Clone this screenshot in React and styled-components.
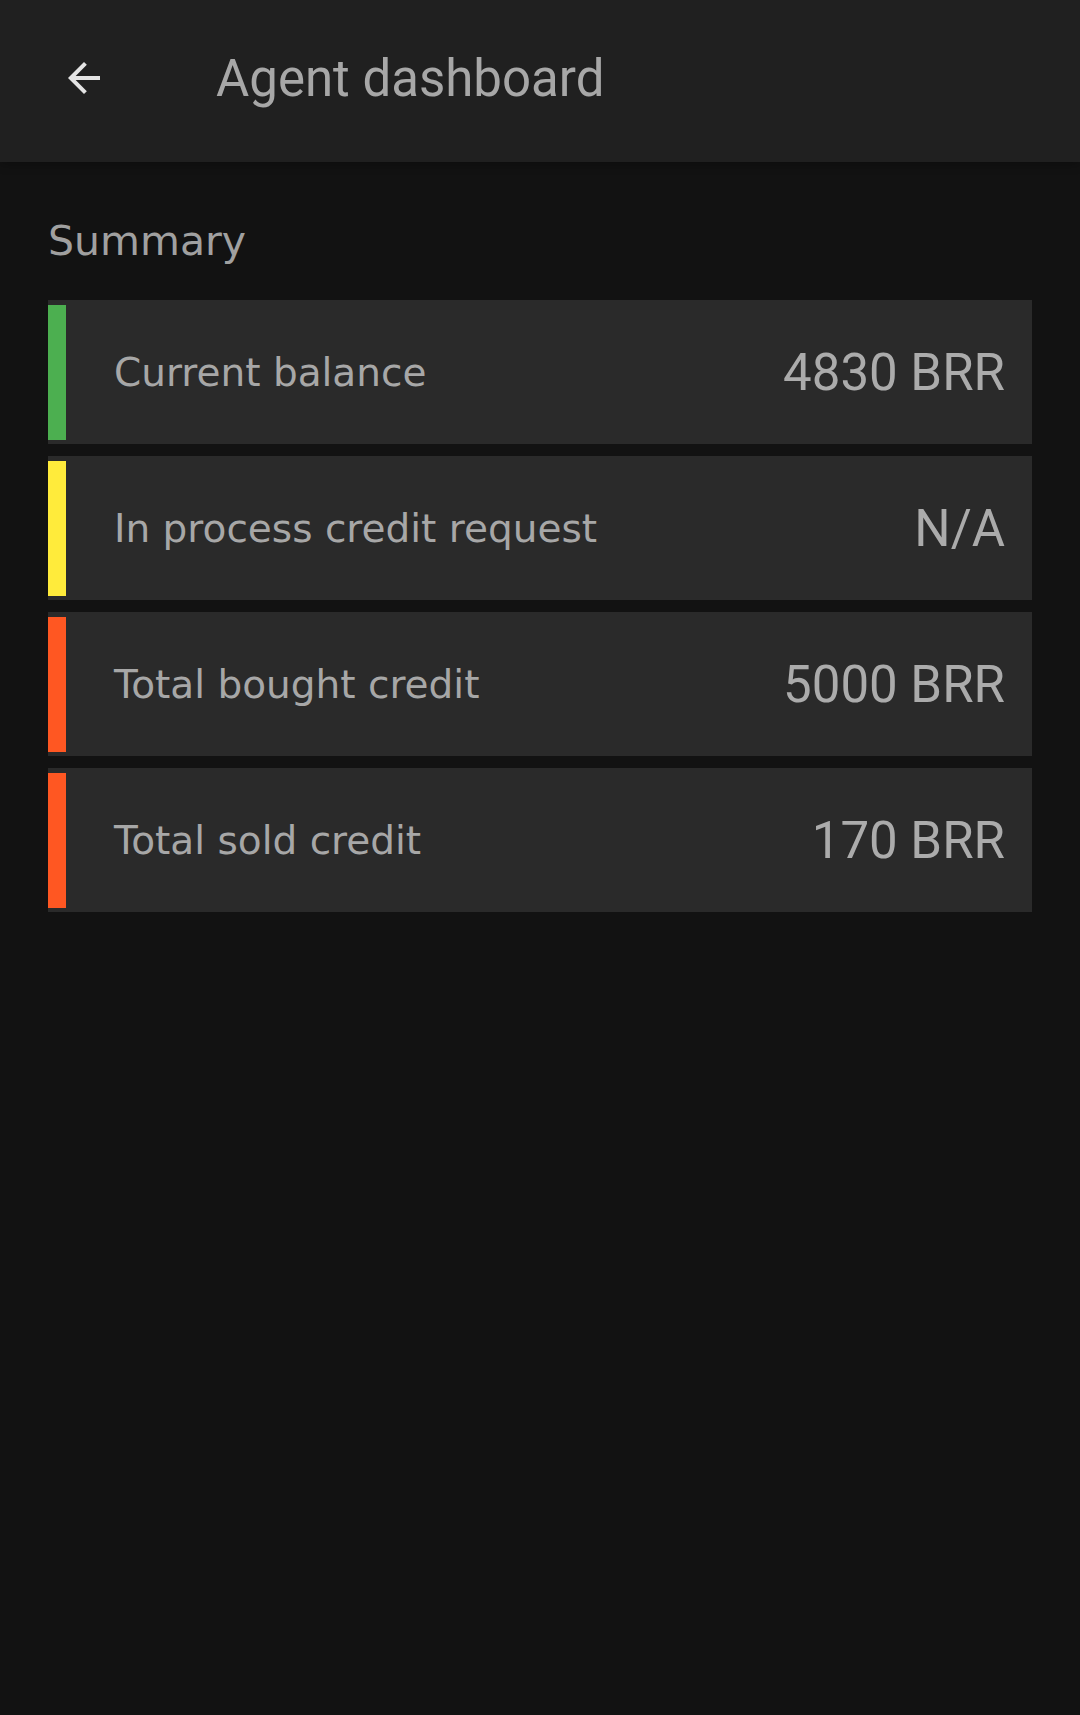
import React from "react";
import styled, { createGlobalStyle } from "styled-components";

const GlobalStyle = createGlobalStyle`
  *, *::before, *::after { box-sizing: border-box; }
  body {
    margin: 0;
    background: #121212;
    color: #a7a7a7;
    font-family: Roboto, sans-serif;
  }
`;

const Screen = styled.div`
  min-height: 100vh;
  background: #121212;
`;

const AppBar = styled.header`
  display: flex;
  align-items: flex-start;
  gap: 96px;
  padding: 36px 48px 40px;
  background: #202020;
  box-shadow: 0 2px 10px rgba(0, 0, 0, 0.3);
`;

const BackButton = styled.button`
  display: flex;
  align-items: center;
  justify-content: center;
  width: 72px;
  height: 84px;
  padding: 0;
  border: 0;
  background: none;
  color: #e4e4e4;
  cursor: pointer;
`;

const Title = styled.h1`
  margin: 0;
  font-size: 51px;
  font-weight: 400;
  line-height: 86px;
`;

const Content = styled.main`
  padding: 48px;
`;

const SectionTitle = styled.h2`
  margin: 0 0 28px;
  color: #a0a0a0;
  font-family: "DejaVu Sans", sans-serif;
  font-size: 41px;
  font-weight: 400;
  line-height: 62px;
`;

const SummaryList = styled.dl`
  display: flex;
  flex-direction: column;
  gap: 12px;
  margin: 0;
`;

const SummaryRow = styled.div`
  display: flex;
  align-items: center;
  height: 144px;
  padding: 5px 27px 4px 0;
  background: #2a2a2a;

  &::before {
    content: "";
    align-self: stretch;
    width: 18px;
    margin-right: 48px;
    background: ${({ $accent }) => $accent};
  }
`;

const Label = styled.dt`
  flex: 1;
  font-family: "DejaVu Sans", sans-serif;
  font-size: 39px;
  line-height: 48px;
`;

const Amount = styled.dd`
  margin: 0;
  color: #ababab;
  font-size: 51px;
  line-height: 60px;
  white-space: nowrap;
`;

const summary = [
  { label: "Current balance", amount: "4830 BRR", accent: "#4caf50" },
  { label: "In process credit request", amount: "N/A", accent: "#ffeb3b" },
  { label: "Total bought credit", amount: "5000 BRR", accent: "#ff5722" },
  { label: "Total sold credit", amount: "170 BRR", accent: "#ff5722" },
];

function BackArrow() {
  return (
    <svg width="48" height="48" viewBox="0 0 24 24" fill="currentColor" aria-hidden="true">
      <path d="M20 11H7.83l5.59-5.59L12 4l-8 8 8 8 1.41-1.41L7.83 13H20v-2z" />
    </svg>
  );
}

export default function App() {
  return (
    <Screen>
      <GlobalStyle />
      <AppBar>
        <BackButton type="button" aria-label="Back">
          <BackArrow />
        </BackButton>
        <Title>Agent dashboard</Title>
      </AppBar>
      <Content>
        <SectionTitle>Summary</SectionTitle>
        <SummaryList>
          {summary.map(({ label, amount, accent }) => (
            <SummaryRow key={label} $accent={accent}>
              <Label>{label}</Label>
              <Amount>{amount}</Amount>
            </SummaryRow>
          ))}
        </SummaryList>
      </Content>
    </Screen>
  );
}
